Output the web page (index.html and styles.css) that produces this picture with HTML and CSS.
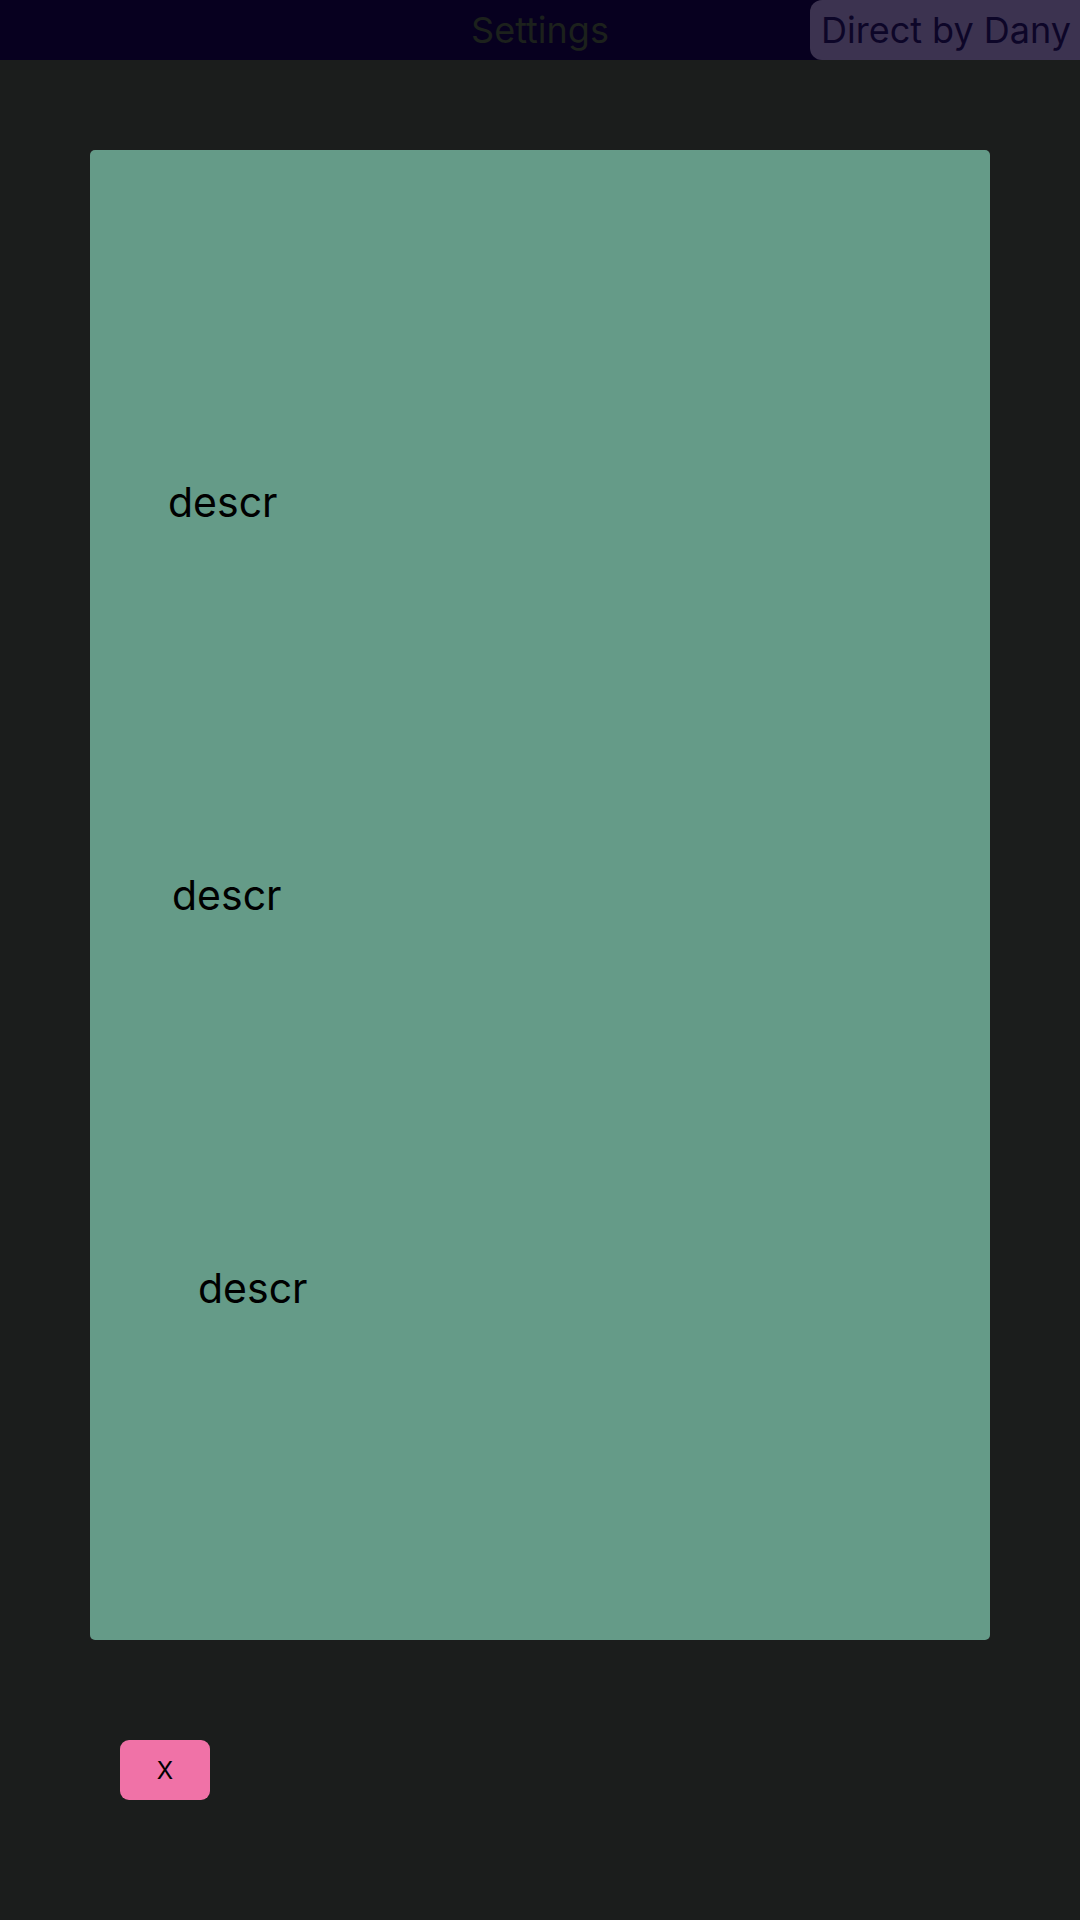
FILE: index.html
```html
<!DOCTYPE html>
<html>
<head>
<meta charset="utf-8">
<link rel="stylesheet" href="styles.css">
</head>
<body>
<header class="topbar">
  <div class="spacer"></div>
  <div class="title">Settings</div>
  <div class="right"><button class="direct">Direct by Dany</button></div>
</header>
<main class="content">
  <section class="card">
    <div class="row row-a">descr</div>
    <div class="row row-b">descr</div>
    <div class="row row-c">descr</div>
  </section>
  <button class="close">X</button>
</main>
</body>
</html>
```
FILE: styles.css
```css
html, body {
  margin: 0;
  padding: 0;
}
body {
  background: #1b1d1c;
  font-family: Inter, "Noto Sans", sans-serif;
  width: 1080px;
  height: 1920px;
  overflow: hidden;
}
.topbar {
  height: 60px;
  background: #07001f;
  display: grid;
  grid-template-columns: 1fr auto 1fr;
  align-items: stretch;
}
.title {
  font-size: 36px;
  line-height: 60px;
  color: #1c211c;
}
.right {
  display: flex;
  justify-content: flex-end;
}
.direct {
  width: 270px;
  height: 60px;
  margin: 0;
  border: none;
  background: #3c3350;
  color: #0d0628;
  font-family: Inter, "Noto Sans", sans-serif;
  font-size: 36px;
  border-radius: 12px 0 0 12px;
  padding: 0 0 0 11px;
  text-align: left;
  line-height: 60px;
}
.content {
  padding: 90px 0 0 90px;
  display: flex;
  flex-direction: column;
  align-items: flex-start;
}
.card {
  width: 900px;
  height: 1490px;
  background: #659b88;
  border-radius: 5px;
  display: flex;
  flex-direction: column;
  justify-content: center;
  gap: 343px;
}
.row {
  font-size: 41px;
  color: #000;
}
.row-a { padding-left: 78px; }
.row-b { padding-left: 82px; }
.row-c { padding-left: 108px; }
.close {
  margin: 100px 0 0 30px;
  width: 90px;
  height: 60px;
  border: none;
  border-radius: 9px;
  background: #f072a7;
  color: #000;
  font-family: Inter, "Noto Sans", sans-serif;
  font-size: 24px;
  padding: 0;
}
```
